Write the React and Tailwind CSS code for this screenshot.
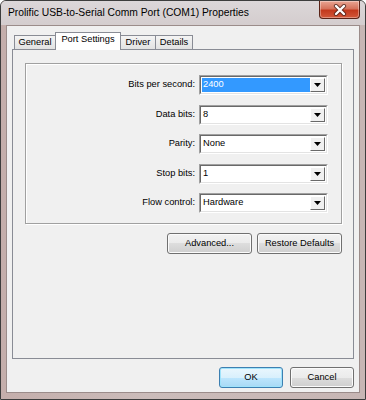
import React from "react";

const dlg = { fontFamily: '"Liberation Sans", Arial, sans-serif' };

function Combo({ value, selected }) {
  return (
    <div className="w-[129px] h-[20px] flex border border-t-[#a0a0a0] border-l-[#a0a0a0] border-b-white border-r-white">
      <div className="flex-1 flex border border-t-[#696969] border-l-[#696969] border-b-[#e3e3e3] border-r-[#e3e3e3] bg-white p-px">
        <div className={"flex-1 flex items-center pl-[1px] " + (selected ? "bg-[#3399ff] text-white" : "text-black")}>
          {value}
        </div>
        <div className="w-[15px] flex items-center justify-center bg-[#f0f0f0] border border-t-white border-l-white border-b-[#696969] border-r-[#696969]">
          <svg width="7" height="4" viewBox="0 0 7 4">
            <polygon points="0,0 7,0 3.5,4" fill="#000" />
          </svg>
        </div>
      </div>
    </div>
  );
}

function Row({ label, value, selected }) {
  return (
    <div className="flex items-center h-[20px]">
      <div className="w-[170px] text-right pr-px">{label}</div>
      <div className="ml-[3px]">
        <Combo value={value} selected={selected} />
      </div>
    </div>
  );
}

function Btn({ children, w = "w-[85px]", def }) {
  return (
    <div
      className={
        "h-[21px] rounded-[3px] border flex items-center justify-center " +
        w +
        " " +
        (def
          ? "border-[#3c7fb1] bg-[linear-gradient(#eaf6fd_0%,#d9f0fc_50%,#bee6fd_50%,#a7d9f5_100%)] shadow-[inset_0_0_0_1px_#9fe3fb]"
          : "border-[#707070] bg-[linear-gradient(#f2f2f2_0%,#ebebeb_50%,#dddddd_50%,#cfcfcf_100%)] shadow-[inset_0_0_0_1px_#fbfbfb]")
      }
    >
      <span className="text-black">{children}</span>
    </div>
  );
}

function Tab({ children, w, sel }) {
  return (
    <div
      className={
        "-ml-px first:ml-0 flex items-center justify-center border-t border-l border-r border-[#898c95] " +
        w +
        " " +
        (sel
          ? "h-[18px] bg-white relative z-20 pb-[3px]"
          : "h-[14px] mb-px bg-[linear-gradient(#f4f4f4,#e2e2e2)] relative z-10")
      }
    >
      {children}
    </div>
  );
}

export default function App() {
  return (
    <div className="w-[366px] h-[400px] bg-white">
      <div className="w-[366px] h-[400px] border border-[#3d3d3d] rounded-t-[6px] bg-[linear-gradient(90deg,#c4aeab,#cbbcba_40%,#c7b6b4)] flex flex-col relative overflow-hidden">
        {/* title bar */}
        <div
          className="h-[24px] flex items-center pl-[7px] bg-[linear-gradient(#dcd7d9,#d4cdce)] text-[10.3px] text-black"
          style={dlg}
        >
          Prolific USB-to-Serial Comm Port (COM1) Properties
        </div>
        {/* close button */}
        <div className="absolute top-0 right-[5px] w-[41px] h-[18px] rounded-b-[4px] border border-t-0 border-[#5a2317] bg-[linear-gradient(#e9a593_0%,#d5735c_45%,#c3391d_55%,#d2583a_100%)] shadow-[inset_0_0_0_1px_rgba(255,255,255,0.35)] flex items-center justify-center">
          <svg width="14" height="12" viewBox="0 0 14 12">
            <path d="M3 2 L11 10 M11 2 L3 10" stroke="#3a1a14" strokeWidth="4.2" strokeLinecap="round" opacity="0.7" />
            <path d="M3 2 L11 10 M11 2 L3 10" stroke="#ffffff" strokeWidth="2.4" strokeLinecap="round" />
          </svg>
        </div>
        {/* client */}
        <div className="mx-[5px] mb-[6px] flex-1 border border-[#9b8c8a] bg-[#f0f0f0] px-[5px] pt-[6px] pb-[4px] flex flex-col text-[9.3px]" style={dlg}>
          <div className="h-[18px] -mb-px flex items-end pl-[2px] relative z-10">
            <Tab w="w-[42px]">General</Tab>
            <Tab w="w-[66px]" sel>
              Port Settings
            </Tab>
            <Tab w="w-[36px]">Driver</Tab>
            <Tab w="w-[38px]">Details</Tab>
          </div>
          <div className="h-[310px] border border-[#898c95] bg-[#f0f0f0] flex flex-col">
            <div className="mt-[13px] ml-[12px] mr-[11px] h-[161px] border border-[#a0a0a0] shadow-[inset_1px_1px_0_#fff,1px_1px_0_#fff] pt-[11px] flex flex-col gap-[9.5px]">
              <Row label="Bits per second:" value="2400" selected />
              <Row label="Data bits:" value="8" />
              <Row label="Parity:" value="None" />
              <Row label="Stop bits:" value="1" />
              <Row label="Flow control:" value="Hardware" />
            </div>
            <div className="mt-[9px] mr-[11px] flex justify-end gap-[5px]">
              <Btn>Advanced...</Btn>
              <Btn>Restore Defaults</Btn>
            </div>
          </div>
          <div className="mt-[8px] flex justify-end gap-[7px]">
            <Btn w="w-[64px]" def>
              OK
            </Btn>
            <Btn w="w-[64px]">Cancel</Btn>
          </div>
        </div>
      </div>
    </div>
  );
}
